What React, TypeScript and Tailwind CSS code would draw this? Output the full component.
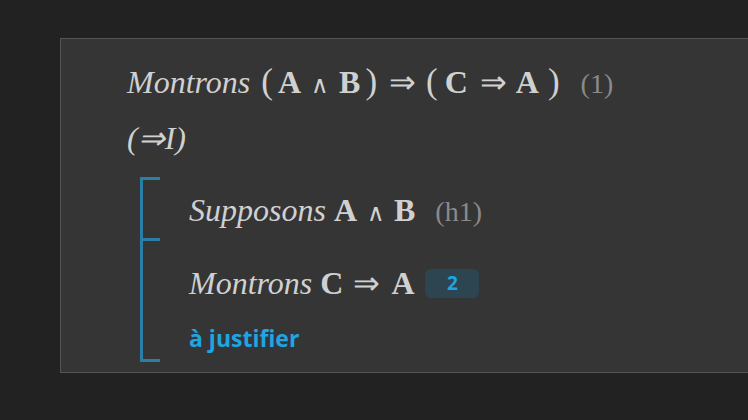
import React from 'react';

const serif = { fontFamily: '"Liberation Serif", "Times New Roman", serif' };

function Badge({ n }: { n: number }) {
  return (
    <span className="ml-[11px] inline-flex h-[29px] w-[54px] items-center justify-center rounded-[6px] bg-[#2c4550] text-[19px] font-bold text-[#1ea5e3] [font-family:'Open_Sans',sans-serif]">
      {n}
    </span>
  );
}

export default function App() {
  return (
    <div className="h-[420px] w-[748px] overflow-hidden bg-[#222222] pt-[38px] pl-[60px]">
      <div className="h-[335px] w-[720px] border border-[#555555] bg-[#353535] pl-[66px] pt-[21px] text-[#d0d0d0]" style={serif}>
        {/* goal */}
        <div className="flex items-baseline text-[32px] leading-[44px]">
          <i>Montrons</i>
          <span className="ml-[11px] text-[35px]">(</span>
          <b className="ml-[5px]">A</b>
          <span className="ml-[10px] text-[24px]">∧</span>
          <b className="ml-[10px]">B</b>
          <span className="ml-[5px] text-[35px]">)</span>
          <span className="ml-[12px]">⇒</span>
          <span className="ml-[10px] text-[35px]">(</span>
          <b className="ml-[7px]">C</b>
          <span className="ml-[12px]">⇒</span>
          <b className="ml-[9px]">A</b>
          <span className="ml-[9px] text-[35px]">)</span>
          <span className="ml-[21px] text-[28px] text-[#8a8a8a]">(1)</span>
        </div>
        <div className="mt-[9px] text-[32px] italic leading-[44px]">(⇒I)</div>

        {/* sub proof */}
        <div className="ml-[13px] mt-[17px] grid grid-cols-[20px_1fr]">
          <div className="h-[61px] border-l-[3px] border-t-[3px] border-[#2b7fa6]" />
          <div className="flex h-[61px] items-baseline pl-[29px] pt-[11px] text-[32px] leading-[44px]">
            <i>Supposons</i>
            <b className="ml-[8px]">A</b>
            <span className="ml-[10px] text-[24px]">∧</span>
            <b className="ml-[9px]">B</b>
            <span className="ml-[20px] text-[28px] text-[#8a8a8a]">(h1)</span>
          </div>
          <div className="h-[124px] border-y-[3px] border-l-[3px] border-[#2b7fa6]" />
          <div className="h-[124px] pl-[29px] pt-[23px]">
            <div className="flex items-center text-[32px] leading-[44px]">
              <i>Montrons</i>
              <b className="ml-[8px]">C</b>
              <span className="ml-[10px]">⇒</span>
              <b className="ml-[11px]">A</b>
              <Badge n={2} />
            </div>
            <div className="mt-[18px] text-[23px] font-bold leading-[30px] text-[#1ea5e3] [font-family:'Open_Sans',sans-serif]">
              à justifier
            </div>
          </div>
        </div>
      </div>
    </div>
  );
}
